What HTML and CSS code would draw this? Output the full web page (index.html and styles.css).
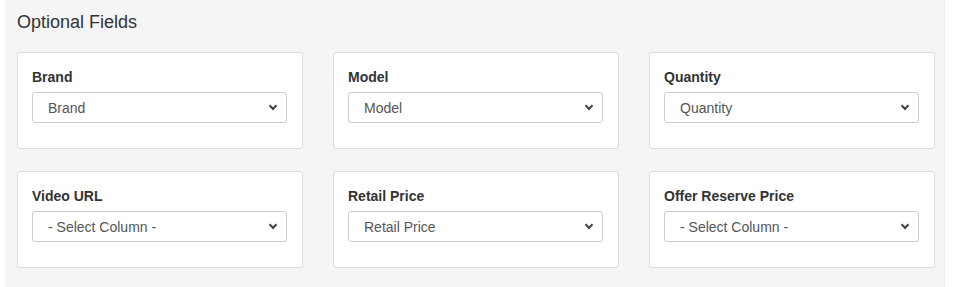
FILE: index.html
```html
<!DOCTYPE html>
<html lang="en">
<head>
  <meta charset="UTF-8">
  <title>Optional Fields</title>
  <link rel="stylesheet" href="styles.css">
</head>
<body>

  <!-- optional field mapping -->
  <div class="optional-panel">
    <h2>Optional Fields</h2>

    <div class="field-grid">
      <div class="field-card">
        <label for="brand">Brand</label>
        <div class="select-wrap">
          <select id="brand"><option>Brand</option></select>
        </div>
      </div>

      <div class="field-card">
        <label for="model">Model</label>
        <div class="select-wrap">
          <select id="model"><option>Model</option></select>
        </div>
      </div>

      <div class="field-card">
        <label for="quantity">Quantity</label>
        <div class="select-wrap">
          <select id="quantity"><option>Quantity</option></select>
        </div>
      </div>

      <div class="field-card">
        <label for="video-url">Video URL</label>
        <div class="select-wrap">
          <select id="video-url"><option>- Select Column -</option></select>
        </div>
      </div>

      <div class="field-card">
        <label for="retail-price">Retail Price</label>
        <div class="select-wrap">
          <select id="retail-price"><option>Retail Price</option></select>
        </div>
      </div>

      <div class="field-card">
        <label for="reserve-price">Offer Reserve Price</label>
        <div class="select-wrap">
          <select id="reserve-price"><option>- Select Column -</option></select>
        </div>
      </div>
    </div>
  </div>

</body>
</html>
```

FILE: styles.css
```css
body {
  font-family: 'Liberation Sans', Arial, sans-serif;
  margin: 0;
  padding: 0;
  background-color: #fff;
  color: #333;
}

.optional-panel {
  margin-left: 5px;
  width: 940px;
  box-sizing: border-box;
  background-color: #f5f5f5;
  border-right: 1px solid #ececec;
  padding: 12px 10px 20px 12px;
  min-height: 287px;
}

h2 {
  font-size: 18px;
  font-weight: normal;
  line-height: 20px;
  margin: 0 0 20px 0;
  color: #333;
}

.field-grid {
  display: grid;
  grid-template-columns: repeat(3, 286px);
  column-gap: 30px;
  row-gap: 22px;
}

.field-card {
  background-color: #fff;
  border: 1px solid #dcdcdc;
  border-radius: 3px;
  padding: 14px 14px 25px 14px;
  height: 97px;
  box-sizing: border-box;
}

label {
  display: block;
  font-size: 14px;
  font-weight: bold;
  line-height: 20px;
  margin-bottom: 5px;
  color: #333;
}

.select-wrap {
  position: relative;
}

select {
  appearance: none;
  -webkit-appearance: none;
  width: 255px;
  height: 31px;
  box-sizing: border-box;
  border: 1px solid #ccc;
  border-radius: 3px;
  background-color: #fff;
  color: #555;
  font-family: 'Liberation Sans', Arial, sans-serif;
  font-size: 14px;
  padding: 0 30px 0 15px;
}

/* chevron */
.select-wrap::after {
  content: '';
  position: absolute;
  right: 12px;
  top: 11px;
  width: 4px;
  height: 4px;
  border-right: 2px solid #444;
  border-bottom: 2px solid #444;
  transform: rotate(45deg);
  pointer-events: none;
}
```
